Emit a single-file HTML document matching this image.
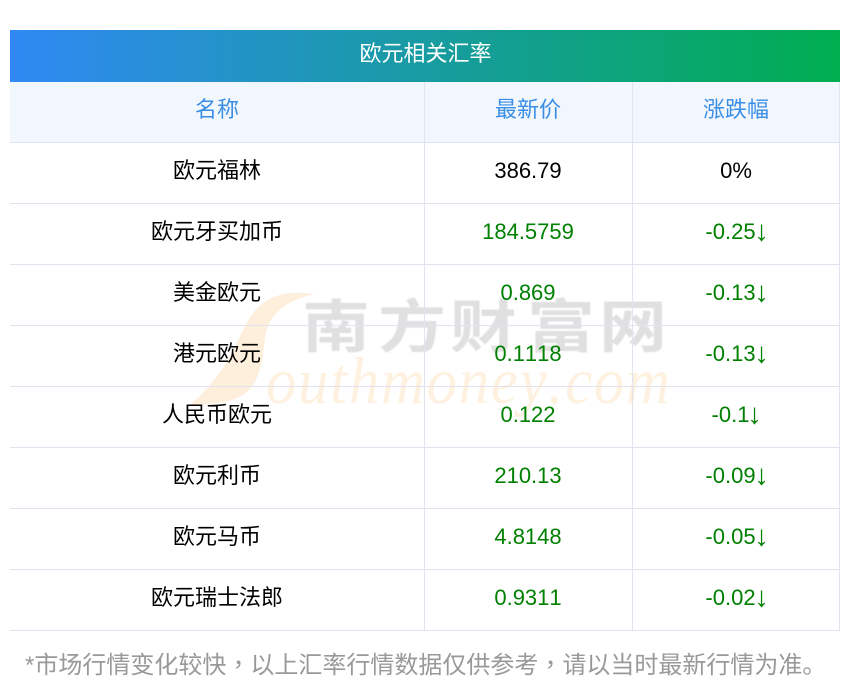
<!DOCTYPE html>
<html>
<head>
<meta charset="utf-8">
<style>
html,body{margin:0;padding:0;background:#fff;width:850px;height:697px;overflow:hidden}
body{position:relative;font-family:"Liberation Sans","WenQuanYi Zen Hei","Noto Sans CJK SC",sans-serif;color:#000;font-kerning:none}
.wm{position:absolute;left:0;top:0;z-index:1}
.title{position:absolute;left:11px;top:30px;width:829px;height:52px;line-height:47px;text-align:center;color:#fff;font-size:22px;z-index:3}
.bar{position:absolute;left:10px;top:30px;width:830px;height:52px;background:linear-gradient(90deg,#3089f4,#00ae50);z-index:2}
.row{position:absolute;left:10px;width:830px;height:61px;box-sizing:border-box;border-bottom:1px solid #e1e4ee;z-index:2;font-size:22px}
.row div{position:absolute;top:0;height:60px;line-height:56px;text-align:center;box-sizing:border-box;border-right:1px solid #e1e4ee}
.a{left:0;width:415px}
.b{left:415px;width:208px;padding-right:1px}
.c{left:623px;width:207px}
.hd{top:82px;height:61px;background:#f2f7fe;color:#3a8ee6}
.g{color:#008000}
i{display:inline-block;font-style:normal;transform:scale(1.35,1.3);transform-origin:50% 55%}
.foot{position:absolute;left:25px;top:649px;font-size:24px;line-height:34px;color:#999;white-space:nowrap;z-index:3}
.foot span{font-family:"Noto Sans CJK TC",sans-serif;line-height:0}
</style>
</head>
<body>
<svg class="wm" width="850" height="697" viewBox="0 0 850 697">
<path d="M315 294C295 291 275 293 262 304C245 318 240 340 228 360C216 380 200 397 187 407C205 403 232 405 247 392C262 378 263 355 265 338C268 318 280 302 315 294Z" fill="#feefdc"/>
<g font-family="'Noto Sans CJK SC',sans-serif" font-weight="700" font-size="68" fill="#e0e0e0" style="filter:blur(.6px)">
<text transform="translate(302 347) scale(1 .84)">南</text>
<text transform="translate(378 347) scale(1 .84)">方</text>
<text transform="translate(450 347) scale(.98 .84)">财</text>
<text transform="translate(527 347) scale(1 .84)">富</text>
<text transform="translate(599 347) scale(1 .84)">网</text>
</g>
<text transform="translate(266 403) scale(.92 1)" font-family="'Liberation Serif',serif" font-style="italic" font-size="66" textLength="439" lengthAdjust="spacing" fill="#fef1e0">outhmoney.com</text>
</svg>
<div class="bar"></div>
<div class="title">欧元相关汇率</div>
<div class="row hd"><div class="a">名称</div><div class="b">最新价</div><div class="c">涨跌幅</div></div>
<div class="row" style="top:143px"><div class="a">欧元福林</div><div class="b">386.79</div><div class="c">0%</div></div>
<div class="row" style="top:204px"><div class="a">欧元牙买加币</div><div class="b g">184.5759</div><div class="c g">-0.25<i>↓</i></div></div>
<div class="row" style="top:265px"><div class="a">美金欧元</div><div class="b g">0.869</div><div class="c g">-0.13<i>↓</i></div></div>
<div class="row" style="top:326px"><div class="a">港元欧元</div><div class="b g">0.1118</div><div class="c g">-0.13<i>↓</i></div></div>
<div class="row" style="top:387px"><div class="a">人民币欧元</div><div class="b g">0.122</div><div class="c g">-0.1<i>↓</i></div></div>
<div class="row" style="top:448px"><div class="a">欧元利币</div><div class="b g">210.13</div><div class="c g">-0.09<i>↓</i></div></div>
<div class="row" style="top:509px"><div class="a">欧元马币</div><div class="b g">4.8148</div><div class="c g">-0.05<i>↓</i></div></div>
<div class="row" style="top:570px"><div class="a">欧元瑞士法郎</div><div class="b g">0.9311</div><div class="c g">-0.02<i>↓</i></div></div>
<div class="foot">*市场行情变化较快<span>，</span>以上汇率行情数据仅供参考<span>，</span>请以当时最新行情为准。</div>
</body>
</html>
